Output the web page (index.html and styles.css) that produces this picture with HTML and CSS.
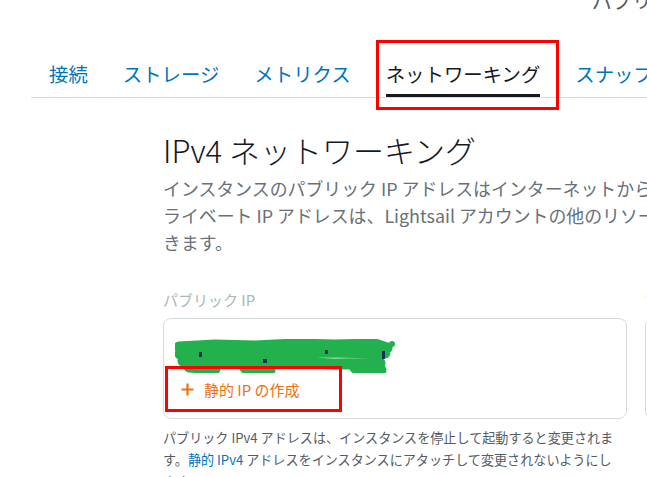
FILE: index.html
```html
<!DOCTYPE html>
<html>
<head>
  <meta charset="utf-8">
  <link rel="stylesheet" href="styles.css">
</head>
<body>
  <div class="top-row">
    <span class="top-title">パブリック IP</span>
  </div>

  <div class="tabs">
    <a class="tab">接続</a>
    <a class="tab">ストレージ</a>
    <a class="tab">メトリクス</a>
    <a class="tab active">ネットワーキング<span class="mark mark-tab"></span></a>
    <a class="tab">スナップショット</a>
  </div>

  <div class="section">
    <h1>IPv4 ネットワーキング</h1>
    <p class="intro">インスタンスのパブリック IP アドレスはインターネットからアクセスできます。プ<br>ライベート IP アドレスは、Lightsail アカウントの他のリソースからのみアクセスで<br>きます。</p>

    <div class="columns">
      <div class="column">
        <div class="label">パブリック IP</div>
        <div class="card">
          <div class="ip-hidden">
            <svg width="222" height="34" viewBox="0 0 222 34">
              <path d="M4 8 L40 6 L80 7 L120 5 L160 6 L200 5 L212 9 M5 15 L50 14 L100 16 L150 13 L210 14 M8 22 L60 24 L110 23 L160 25 L205 24 M14 28 L40 30 M70 29 L95 31 M180 29 L206 31" stroke="#22b14c" stroke-width="11" fill="none" stroke-linecap="round" stroke-linejoin="round"/>
              <circle cx="217" cy="5" r="3" fill="#22b14c"/>
              <rect x="24" y="13" width="3" height="5" fill="#1e2a5a"/>
              <rect x="88" y="20" width="4" height="4" fill="#1e2a5a"/>
              <rect x="150" y="11" width="3" height="4" fill="#1e2a5a"/>
              <rect x="207" y="12" width="3" height="8" fill="#1e2a5a"/>
            </svg>
          </div>
          <button class="create">
            <svg width="13" height="13" viewBox="0 0 13 13"><path d="M6.5 0.5 V12.5 M0.5 6.5 H12.5" stroke="#ec7211" stroke-width="2.2"/></svg>
            <span>静的 IP の作成</span>
            <span class="mark"></span>
          </button>
        </div>
        <p class="note">パブリック IPv4 アドレスは、インスタンスを停止して起動すると変更されま<br>す。<a class="link">静的 IPv4</a> アドレスをインスタンスにアタッチして変更されないようにし<br>ます。</p>
      </div>
      <div class="column">
        <div class="label">プライベート IP</div>
        <div class="card"></div>
      </div>
    </div>
  </div>
</body>
</html>
```

FILE: styles.css
```css
body {
  margin: 0;
  font-family: "Noto Sans CJK JP", "Noto Sans", sans-serif;
  color: #16191f;
  background: #fff;
  overflow: hidden;
  height: 477px;
}

.top-row {
  display: flex;
  height: 12px;
  padding-left: 592px;
}

.top-title {
  display: block;
  margin-top: -9px;
  font-size: 20px;
  line-height: 20px;
  color: #545b64;
  white-space: nowrap;
}

.tabs {
  display: flex;
  gap: 35px;
  margin: 49px 0 0 31px;
  padding-left: 18px;
  border-bottom: 1px solid #d9dcdc;
  white-space: nowrap;
}

.tab {
  position: relative;
  font-size: 19.4px;
  line-height: 26px;
  color: #0073bb;
  padding-bottom: 7px;
  border-bottom: 3px solid transparent;
}

.tab.active {
  color: #16191f;
  border-bottom-color: #16191f;
}

.mark {
  position: absolute;
  box-sizing: border-box;
  border: 3px solid #ff0000;
  inset: 0;
}

.mark-tab {
  top: -21px;
  bottom: -16px;
  left: -10px;
  right: -19px;
}

.section {
  margin-left: 163px;
}

h1 {
  margin: 32px 0 0;
  font-size: 31px;
  font-weight: 300;
  line-height: 40px;
  white-space: nowrap;
}

.intro {
  margin: 5px 0 0;
  font-size: 17.9px;
  line-height: 27px;
  color: #687078;
  white-space: nowrap;
}

.columns {
  display: grid;
  grid-template-columns: 464px 464px;
  gap: 18px;
  margin-top: 34px;
}

.label {
  font-size: 15px;
  line-height: 20px;
  color: #aab7b8;
  margin-bottom: 8px;
  white-space: nowrap;
}

.card {
  box-sizing: border-box;
  height: 101px;
  border: 1px solid #d5dbdb;
  border-radius: 8px;
  padding: 20px 0 0 1px;
}

.ip-hidden {
  height: 32px;
  margin-left: 10px;
}

.create {
  position: relative;
  display: flex;
  align-items: center;
  gap: 10px;
  box-sizing: border-box;
  width: 177px;
  height: 46px;
  margin-top: -5px;
  padding: 0 0 0 16px;
  border: none;
  background: none;
  font-family: inherit;
  font-size: 15px;
  color: #ec7211;
}

.note {
  margin: 8px 0 0;
  font-size: 13.1px;
  line-height: 22px;
  color: #545b64;
  white-space: nowrap;
}

.link {
  color: #0073bb;
}
```
